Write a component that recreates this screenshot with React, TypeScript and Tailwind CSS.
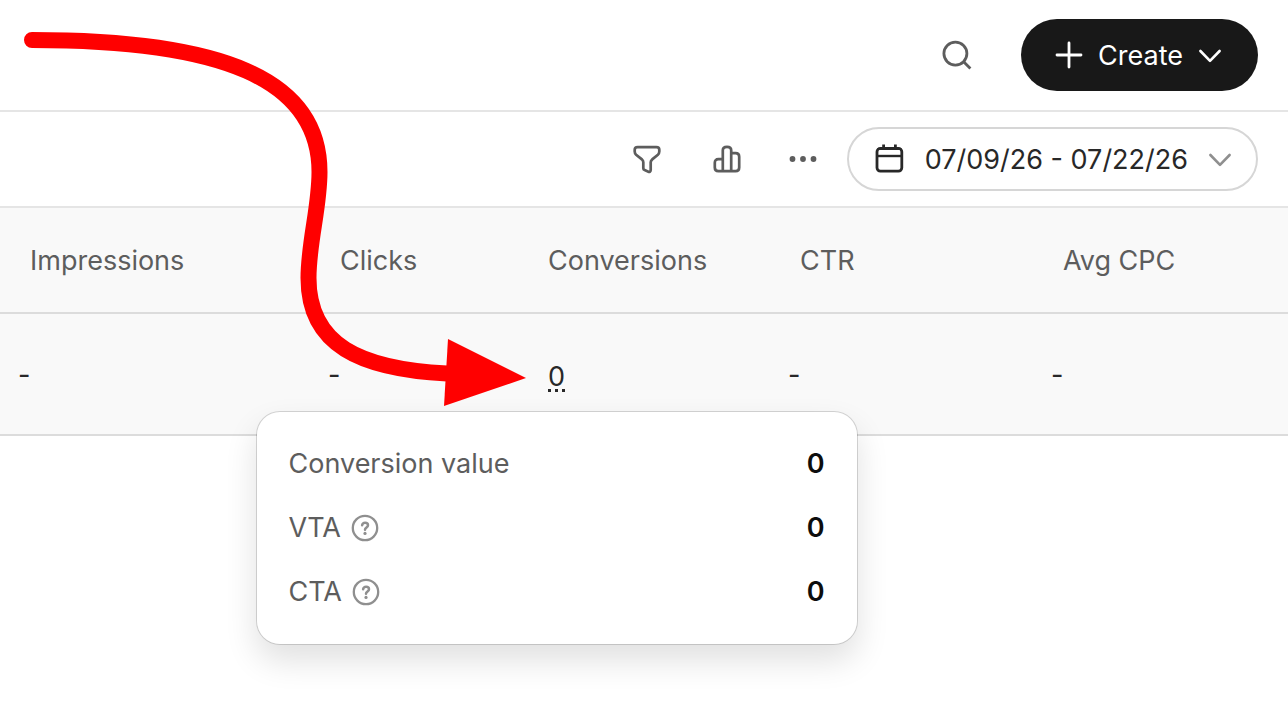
import React from "react";

function SearchIcon() {
  return (
    <svg className="size-8" viewBox="0 0 32 32" fill="none" stroke="currentColor" strokeWidth="2.8" strokeLinecap="butt" aria-hidden="true">
      <circle cx="14.4" cy="14.6" r="11.5" />
      <path d="M22.4 22.4 L29.4 29.4" />
    </svg>
  );
}

function PlusIcon() {
  return (
    <svg className="size-7" viewBox="0 0 28 28" fill="none" stroke="currentColor" strokeWidth="2.8" strokeLinecap="round" aria-hidden="true">
      <path d="M14 2v24M2 14h24" />
    </svg>
  );
}

function ChevronIcon() {
  return (
    <svg className="size-6" viewBox="0 0 24 24" fill="none" stroke="currentColor" strokeWidth="2.6" strokeLinecap="round" strokeLinejoin="round" aria-hidden="true">
      <path d="M2.4 8 L12 17.8 L21.6 8" />
    </svg>
  );
}

function FilterIcon() {
  return (
    <svg className="size-8" viewBox="0 0 32 32" fill="none" stroke="currentColor" strokeWidth="2.7" strokeLinejoin="round" aria-hidden="true">
      <path d="M6.6 4.1H25.4C27.2 4.1 28.3 5.2 28.3 6.8V8.6C28.3 9.8 27.8 10.9 26.9 11.7L21.2 16.4C20.2 17.3 19.7 18.1 19.7 19.3V27C19.7 28.4 18.6 29.2 17.4 28.7L13.6 27.1C12.8 26.8 12.3 26.2 12.3 25.3V19.3C12.3 18.1 11.8 17.3 10.9 16.4L5.1 11.7C4.2 10.9 3.7 9.8 3.7 8.6V6.8C3.7 5.2 4.8 4.1 6.6 4.1Z" />
    </svg>
  );
}

function BarsIcon() {
  return (
    <svg className="size-8" viewBox="0 0 32 32" fill="none" stroke="currentColor" strokeWidth="2.7" strokeLinejoin="round" aria-hidden="true">
      <path d="M11.8 28.2V7.3C11.8 5.1 13.4 3.9 16 3.9S20.2 5.1 20.2 7.3V28.2" />
      <path d="M11.8 16.2H7.4C5 16.2 3.8 17.5 3.8 19.8V24.6C3.8 27 5.1 28.2 7.4 28.2H24.6C27 28.2 28.2 27 28.2 24.6V13.8C28.2 11.5 27 10.2 24.6 10.2H20.2" />
    </svg>
  );
}

function DotsIcon() {
  return (
    <svg className="size-8" viewBox="0 0 32 32" fill="currentColor" aria-hidden="true">
      <circle cx="5.5" cy="16" r="2.9" />
      <circle cx="16" cy="16" r="2.9" />
      <circle cx="26.5" cy="16" r="2.9" />
    </svg>
  );
}

function CalendarIcon() {
  return (
    <svg className="size-8" viewBox="0 0 32 32" fill="none" stroke="currentColor" strokeWidth="2.8" aria-hidden="true">
      <rect x="4" y="5.4" width="24.8" height="22.8" rx="3.4" />
      <path d="M4 6.2h24.8" strokeWidth="1.6" />
      <path d="M4 13h24.8" strokeWidth="2.4" />
      <path d="M10.6 1.4v4M22.4 1.4v4" />
    </svg>
  );
}

function HelpIcon() {
  return (
    <svg className="size-7" viewBox="0 0 28 28" fill="none" stroke="currentColor" strokeWidth="2.3" aria-hidden="true">
      <circle cx="14" cy="14" r="12.2" />
      <path d="M11.1 11.2C11.4 9.6 12.5 8.7 14.1 8.7C15.9 8.7 17 9.7 17 11.2C17 13.5 14 13.4 14 15.8" strokeWidth="2.5" strokeLinecap="round" />
      <circle cx="14" cy="19.4" r="1.6" fill="currentColor" stroke="none" />
    </svg>
  );
}

function PointerArrow() {
  return (
    <svg className="pointer-events-none absolute top-0 left-0 z-20" width="540" height="420" viewBox="0 0 540 420" aria-hidden="true">
      <path
        d="M32 40C220 40 319.5 78 319.5 172C319.5 208 308.5 242 308.5 278C308.5 345 360 369 447 373.5"
        fill="none"
        stroke="#ff0000"
        strokeWidth="16"
        strokeLinecap="round"
      />
      <path d="M448 339L526 378L444 406Z" fill="#ff0000" />
    </svg>
  );
}

const details = [
  { label: "Conversion value", value: "0", help: false },
  { label: "VTA", value: "0", help: true },
  { label: "CTA", value: "0", help: true },
];

function ConversionDetails() {
  return (
    <dl
      id="conversion-details"
      className="absolute top-full left-1/2 z-10 mt-[19px] w-[602px] -translate-x-1/2 rounded-3xl border border-black/15 bg-white bg-clip-padding px-8 py-5 text-left leading-[33px] shadow-[0_16px_32px_rgba(0,0,0,0.12)]"
    >
      {details.map((item) => (
        <div key={item.label} className="flex h-16 items-center justify-between">
          <dt className="flex items-center gap-2.5 text-[#5d5d5d]">
            {item.label}
            {item.help && (
              <button type="button" aria-label={"About " + item.label} className="text-[#8f8f8f]">
                <HelpIcon />
              </button>
            )}
          </dt>
          <dd className="font-semibold text-[#0d0d0d]">{item.value}</dd>
        </div>
      ))}
    </dl>
  );
}

const columns = [
  { label: "Impressions", width: "w-[310px]" },
  { label: "Clicks", width: "w-[208px]" },
  { label: "Conversions", width: "w-[252px]" },
  { label: "CTR", width: "w-[263px]" },
  { label: "Avg CPC", width: "w-auto" },
];

export default function App() {
  return (
    <div className="relative min-h-screen overflow-hidden bg-white font-[Inter,'Liberation_Sans',sans-serif] text-[27px] leading-[33px] text-[#282828]">
      <header className="flex h-28 items-center justify-end gap-12 border-b-2 border-[#e5e5e5] pr-[30px]">
        <button type="button" aria-label="Search" className="text-[#5d5d5d]">
          <SearchIcon />
        </button>
        <button type="button" className="flex h-18 items-center gap-[15px] rounded-full bg-[#181818] pr-9 pl-[34px] text-white">
          <PlusIcon />
          Create
          <ChevronIcon />
        </button>
      </header>

      <div className="flex h-24 items-center justify-end border-b-2 border-[#e5e5e5] pr-[30px] text-[#5d5d5d]">
        <button type="button" aria-label="Filter" className="mr-12">
          <FilterIcon />
        </button>
        <button type="button" aria-label="Charts" className="mr-11">
          <BarsIcon />
        </button>
        <button type="button" aria-label="More options" className="mr-7">
          <DotsIcon />
        </button>
        <button type="button" className="flex h-16 items-center gap-5 rounded-full border-2 border-[#d6d6d6] px-6 text-[#282828]">
          <CalendarIcon />
          07/09/26 - 07/22/26
          <span className="text-[#8f8f8f]">
            <ChevronIcon />
          </span>
        </button>
      </div>

      <table className="w-full table-fixed border-collapse bg-[#f9f9f9] text-left">
        <thead>
          <tr className="h-[105px] border-b-2 border-[#dcdcdc] text-[#5d5d5d]">
            {columns.map((column) => (
              <th key={column.label} scope="col" className={column.width + " pl-[30px] font-normal"}>
                {column.label}
              </th>
            ))}
          </tr>
        </thead>
        <tbody>
          <tr className="h-[122px] border-b-2 border-[#dcdcdc]">
            <td className="pl-[18px]">-</td>
            <td className="pl-[18px]">-</td>
            <td className="pt-2 pl-[30px]">
              <div className="relative block w-fit">
                <button type="button" aria-describedby="conversion-details" className="block border-b-3 border-dotted border-[#282828] leading-6">
                  0
                </button>
                <ConversionDetails />
              </div>
            </td>
            <td className="pl-[18px]">-</td>
            <td className="pl-[18px]">-</td>
          </tr>
        </tbody>
      </table>

      <PointerArrow />
    </div>
  );
}
